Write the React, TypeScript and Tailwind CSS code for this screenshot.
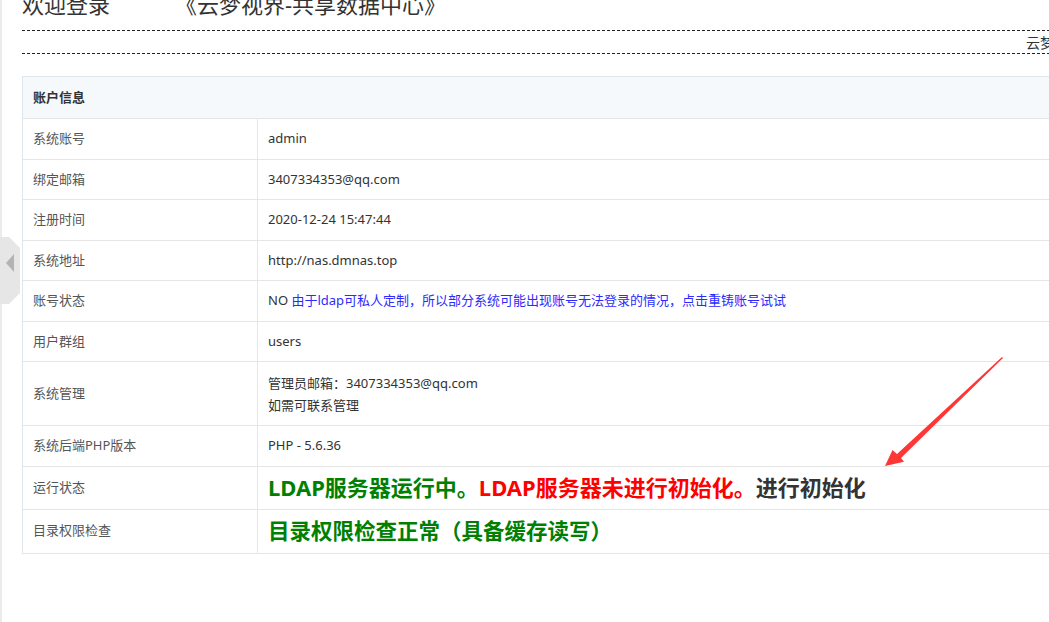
import React from 'react';

// ── Account info page ─────────────────────────────────────────

const font = { fontFamily: '"Noto Sans", "Noto Sans CJK SC", sans-serif' };

interface RowProps {
  label: string;
  children: React.ReactNode;
  className?: string;
}

const Row: React.FC<RowProps> = ({ label, children, className = 'h-[40.5px]' }) => (
  <div className={`flex border-b border-[#e6e6e6] ${className}`}>
    <div className="w-[235px] shrink-0 border-r border-[#e6e6e6] pl-[10px] flex items-center text-[13px] text-[#555]">
      {label}
    </div>
    <div className="flex-1 pl-[10px] flex items-center text-[13px] text-[#333]">{children}</div>
  </div>
);

const SideTab = () => (
  <svg className="absolute left-0 top-[237px]" width="21" height="68" viewBox="0 0 21 68">
    <polygon points="0,0 9,0 20,11 20,56 9,67 0,67" fill="#e6e6e6" />
    <polygon points="6,26 14,17 14,35" fill="#b3b3b3" />
  </svg>
);

const Arrow = () => (
  <svg className="absolute left-[880px] top-[350px]" width="130" height="125" viewBox="0 0 130 125">
    <polygon
      points="5,116 12.5,100 17,104 122,7 123,8 21,108 24,111.8"
      fill="#ff3636"
    />
  </svg>
);

export default function App() {
  return (
    <div className="relative w-[1049px] h-[622px] overflow-hidden bg-white" style={font}>
      <div className="absolute left-0 top-0 bottom-0 w-[2px] bg-[#ebebeb]" />
      <SideTab />

      <div className="pl-[22px] w-[1100px]">
        <div className="-mt-[22px] h-[52px] flex items-center text-[22px] text-[#333] whitespace-nowrap">
          <span>欢迎登录</span>
          <span className="ml-[65px]">《云梦视界-共享数据中心》</span>
        </div>

        <div className="border-t border-b border-dashed border-[#222] h-[24px] flex items-center text-[14px] text-[#333] whitespace-nowrap">
          <span className="pl-[1004px]">云梦视界</span>
        </div>

        <div className="mt-[22px] border-t border-l border-[#e0e6eb]">
          <div className="h-[42px] bg-[#f5f9fc] border-b border-[#e6e6e6] pl-[10px] flex items-center text-[13px] font-bold text-[#333]">
            账户信息
          </div>
          <Row label="系统账号">admin</Row>
          <Row label="绑定邮箱">3407334353@qq.com</Row>
          <Row label="注册时间">2020-12-24 15:47:44</Row>
          <Row label="系统地址">http://nas.dmnas.top</Row>
          <Row label="账号状态">
            <span>NO&nbsp;</span>
            <span className="text-[#2b2bff]">由于ldap可私人定制，所以部分系统可能出现账号无法登录的情况，点击重铸账号试试</span>
          </Row>
          <Row label="用户群组">users</Row>
          <Row label="系统管理" className="h-[64px]">
            <div className="leading-[22px]">
              <div>管理员邮箱：3407334353@qq.com</div>
              <div>如需可联系管理</div>
            </div>
          </Row>
          <Row label="系统后端PHP版本">PHP - 5.6.36</Row>
          <Row label="运行状态" className="h-[43px]">
            <span className="text-[22px] font-bold whitespace-nowrap">
              <span className="text-[#008000]">LDAP服务器运行中。</span>
              <span className="text-[#ff0000]">LDAP服务器未进行初始化。</span>
              <span className="text-[#333]">进行初始化</span>
            </span>
          </Row>
          <Row label="目录权限检查" className="h-[44px]">
            <span className="text-[21.5px] font-bold text-[#008000]">目录权限检查正常（具备缓存读写）</span>
          </Row>
        </div>
      </div>

      <Arrow />
    </div>
  );
}
